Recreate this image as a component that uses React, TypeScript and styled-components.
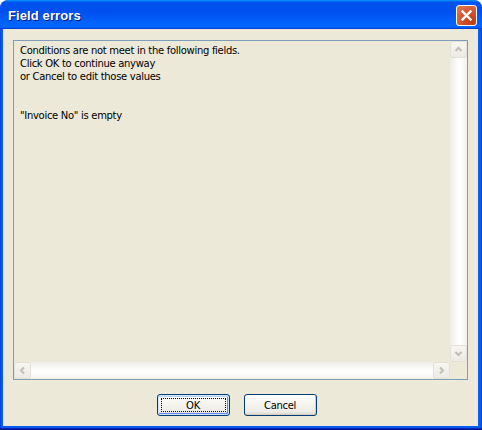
import React from "react";
import styled, { createGlobalStyle } from "styled-components";

const Global = createGlobalStyle`
  html, body { margin: 0; padding: 0; background: #ffffff; }
  #root { width: 482px; height: 430px; }
`;

const Window = styled.div`
  width: 482px;
  height: 430px;
  box-sizing: border-box;
  display: flex;
  flex-direction: column;
  background: linear-gradient(90deg, #0030c8 0px, #0a5cf0 1px, #0a5cf0 calc(100% - 1px), #0020b0 100%);
  border-radius: 8px 8px 0 0;
  overflow: hidden;
  padding: 0 4px 4px 3px;
  box-shadow: inset 0 -1px 0 #00138c, inset 0 -2px 0 #0028c0;
`;

const TitleBar = styled.div`
  height: 29px;
  margin: 0 -4px 0 -3px;
  display: flex;
  align-items: center;
  justify-content: space-between;
  padding: 0 5px 0 8px;
  background: linear-gradient(
    180deg,
    #0997ff,
    #0053ee 8%,
    #0050ee 40%,
    #0066ff 88%,
    #0066ff 93%,
    #005bff 95%,
    #003dd7 96%,
    #003dd7
  );
  border-radius: 8px 8px 0 0;
  flex: none;
`;

const Title = styled.span`
  font-family: "Liberation Sans", Arial, sans-serif;
  font-weight: bold;
  font-size: 13px;
  color: #ffffff;
  text-shadow: 1px 1px 0 #0a1883;
  letter-spacing: 0.1px;
  margin-top: 1px;
`;

const CloseButton = styled.div`
  width: 21px;
  height: 21px;
  box-sizing: border-box;
  border: 1px solid #ffffff;
  border-radius: 3px;
  background: radial-gradient(circle at 80% 85%, #c13b14 0%, #d4512a 45%, #e37c5a 100%);
  display: flex;
  align-items: center;
  justify-content: center;
  margin-top: 2px;
`;

const Body = styled.div`
  flex: 1;
  background: #ece9d8;
  display: flex;
  flex-direction: column;
  padding: 11px 10px 0 10px;
  min-height: 0;
`;

const Frame = styled.div`
  height: 340px;
  box-sizing: border-box;
  border: 1px solid #7f9db9;
  display: grid;
  grid-template-columns: 1fr 17px;
  grid-template-rows: 1fr 17px;
`;

const Content = styled.div`
  font-family: "DejaVu Sans", Verdana, sans-serif;
  font-size: 10px;
  letter-spacing: -0.3px;
  line-height: 13px;
  color: #000000;
  padding: 3px 6px;
  white-space: pre;
`;

const VTrack = styled.div`
  display: flex;
  flex-direction: column;
  justify-content: space-between;
  background: linear-gradient(90deg, #eeede5 0%, #fbfbf9 40%, #ffffff 60%, #f3f1ea 100%);
`;

const HTrack = styled.div`
  display: flex;
  justify-content: space-between;
  background: linear-gradient(180deg, #eeede5 0%, #fbfbf9 40%, #ffffff 60%, #f3f1ea 100%);
`;

const Corner = styled.div`
  background: #ece9d8;
`;

const ScrollButton = styled.div`
  width: 17px;
  height: 17px;
  box-sizing: border-box;
  border: 1px solid #e3e1d6;
  border-radius: 2px;
  background: linear-gradient(180deg, #f6f5f0, #ecebe3);
  display: flex;
  align-items: center;
  justify-content: center;
`;

const ButtonRow = styled.div`
  display: flex;
  justify-content: center;
  gap: 14px;
  padding: 14px 8px 0 0;
`;

const PushButton = styled.div<{ $default?: boolean }>`
  width: 73px;
  height: 22px;
  box-sizing: border-box;
  border: 1px solid #003c74;
  border-radius: 3px;
  background: linear-gradient(180deg, #ffffff 0%, #f4f3ee 50%, #ecebe6 85%, #d6d0c5 100%);
  box-shadow: ${(p) =>
    p.$default
      ? "inset 0 0 0 1px #cee7ff, inset 0 1px 0 1px #bcd4f6, inset -1px -1px 0 1px #6982ee"
      : "inset -1px -1px 0 0 #d6d0c5"};
  font-family: "DejaVu Sans", Verdana, sans-serif;
  font-size: 10px;
  letter-spacing: -0.3px;
  color: #000000;
  display: flex;
  align-items: center;
  justify-content: center;
  position: relative;
`;

const FocusRing = styled.span`
  position: absolute;
  inset: 3px;
  border: 1px dotted #000000;
`;

const Arrow = ({ dir }: { dir: "up" | "down" | "left" | "right" }) => {
  const pts: Record<string, string> = {
    up: "2.5,7 5.5,4 8.5,7",
    down: "2.5,4 5.5,7 8.5,4",
    left: "7,2.5 4,5.5 7,8.5",
    right: "4,2.5 7,5.5 4,8.5",
  };
  return (
    <svg width="11" height="11" viewBox="0 0 11 11">
      <polyline points={pts[dir]} fill="none" stroke="#c2bfb2" strokeWidth="2" />
    </svg>
  );
};

const text = `Conditions are not meet in the following fields.
Click OK to continue anyway
or Cancel to edit those values


"Invoice No" is empty`;

export default function App() {
  return (
    <>
      <Global />
      <Window>
        <TitleBar>
          <Title>Field errors</Title>
          <CloseButton>
            <svg width="13" height="13" viewBox="0 0 13 13">
              <path d="M2.5 2.5 L10.5 10.5 M10.5 2.5 L2.5 10.5" stroke="#ffffff" strokeWidth="2.4" strokeLinecap="square" />
            </svg>
          </CloseButton>
        </TitleBar>
        <Body>
          <Frame>
            <Content>{text}</Content>
            <VTrack>
              <ScrollButton>
                <Arrow dir="up" />
              </ScrollButton>
              <ScrollButton>
                <Arrow dir="down" />
              </ScrollButton>
            </VTrack>
            <HTrack>
              <ScrollButton>
                <Arrow dir="left" />
              </ScrollButton>
              <ScrollButton>
                <Arrow dir="right" />
              </ScrollButton>
            </HTrack>
            <Corner />
          </Frame>
          <ButtonRow>
            <PushButton $default>
              <FocusRing />
              OK
            </PushButton>
            <PushButton>Cancel</PushButton>
          </ButtonRow>
        </Body>
      </Window>
    </>
  );
}
